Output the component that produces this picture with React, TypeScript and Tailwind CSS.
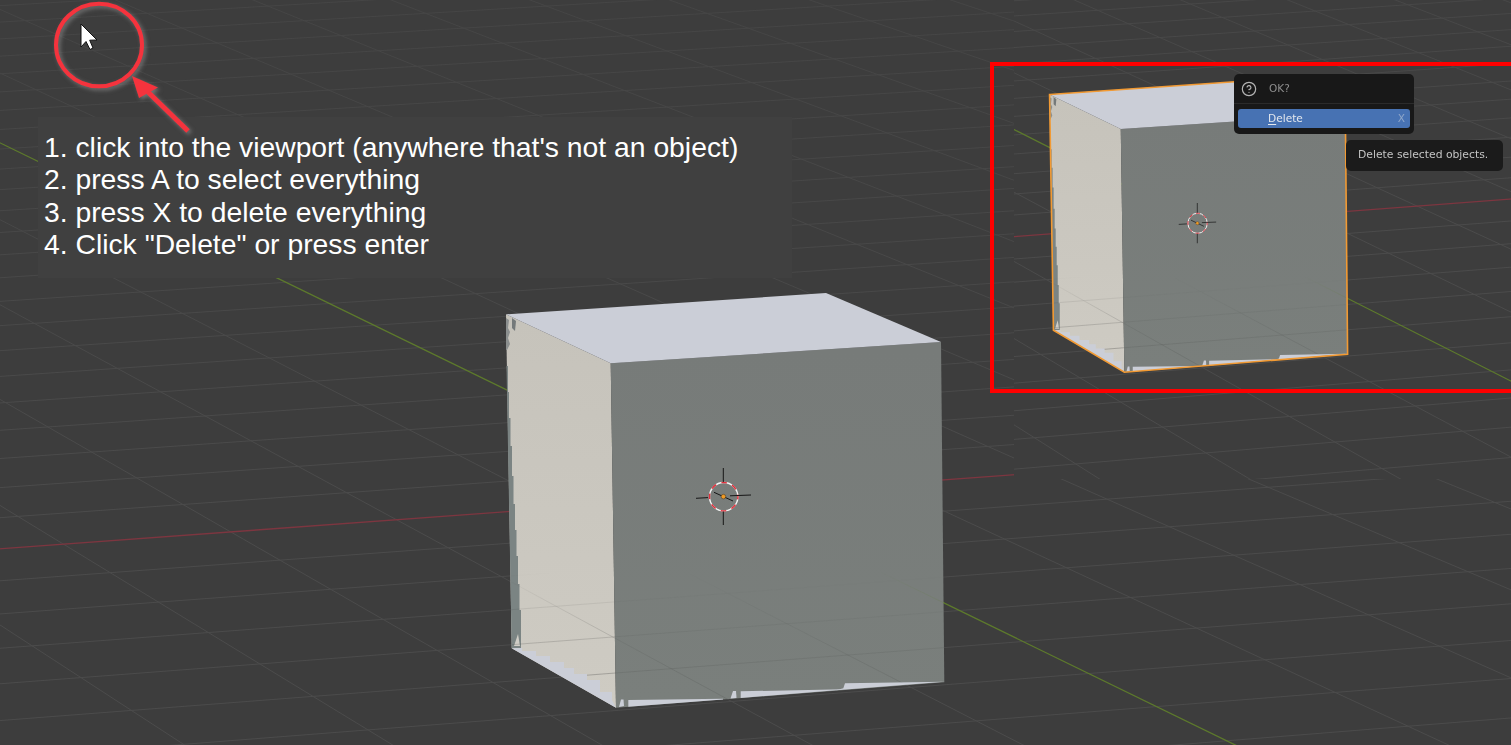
import React from "react";
import { CircleHelp } from "lucide-react";

// Floor plane -> screen homography, calibrated from the reference grid.
const project = (u: number, v: number): [number, number] => {
  const w = 1 + 0.00419 * u - 0.015 * v;
  return [(724.3 + 165.5 * u + 44.4 * v) / w, (495.9 - 9.77 * u + 19.5 * v) / w];
};

const range = (a: number, b: number) => Array.from({ length: b - a + 1 }, (_, i) => a + i);
const U0 = -50, U1 = 70, V0 = -48, V1 = 34;

function GridLines({ stroke, red, green, axis = 1 }: { stroke: string; red: string; green: string; axis?: number }) {
  const line = (a: [number, number], b: [number, number], key: string, color: string, width = 1) => (
    <line key={key} x1={a[0]} y1={a[1]} x2={b[0]} y2={b[1]} stroke={color} strokeWidth={width} vectorEffect="non-scaling-stroke" />
  );
  return (
    <>
      {range(U0, U1).filter((u) => u !== 0).map((u) => line(project(u, V0), project(u, V1), `u${u}`, stroke))}
      {range(V0, V1).filter((v) => v !== 0).map((v) => line(project(U0, v), project(U1, v), `v${v}`, stroke))}
      {line(project(U0, 0), project(U1, 0), "red", red, axis)}
      {line(project(0, V0), project(0, V1), "green", green, axis)}
    </>
  );
}

const CUBE = "506,314.3 826,293 941,342 944.3,682.3 616,707.7 511.7,648.3";
const LEFT = "506,314.3 610.7,363.3 616,707.7 511.7,648.3";
const RIGHT = "610.7,363.3 941,342 944.3,682.3 616,707.7";

function Cube({ selected }: { selected?: boolean }) {
  return (
    <>
      <polygon points={LEFT} fill="url(#leftFace)" />
      <polygon points={RIGHT} fill="url(#rightFace)" />
      <polygon points="506,314.3 826,293 941,342 610.7,363.3" fill="#cbced7" />
      {/* z-fighting strip on the left edge */}
      <polygon
        points="506.5,366 508,366 508,392 509,392 509,418 510.5,418 510.5,446 512,446 512,476 513.5,476 513.5,504 515,504 515,530 516.5,530 516.5,556 518,556 518,584 519.5,584 519.5,610 521,610 521,648 511.7,648.3"
        fill="#7b8483"
      />
      <polygon points="506,318 509,320 508,328 510,332 508,338 510,344 507,350 506,350" fill="#8b8f8f" />
      <polygon points="512,318 516,321 515,331 512,328" fill="#74797a" />
      <polygon points="514,646 518,634 520,646" fill="#d0cdc6" />
      {/* grid seen through the base of the cube */}
      <g mask="url(#cubeFade)">
        <g clipPath="url(#leftClip)">
          <GridLines stroke="rgba(55,55,55,0.3)" red="rgba(55,55,55,0.3)" green="rgba(90,130,30,0.5)" />
        </g>
        <g clipPath="url(#rightClip)">
          <GridLines stroke="rgba(55,55,55,0.14)" red="rgba(55,55,55,0.14)" green="rgba(90,130,30,0.5)" />
        </g>
      </g>
      {/* top face showing through along the bottom edges */}
      <polygon
        points="511.7,648.3 522,648 522,651 536,651 536,656 550,656 550,662 564,662 564,668 574,668 574,674 587,674 587,680 600,680 600,692 612,692 612,700 616,707.7"
        fill="#cbced7"
      />
      <polygon points="628.3,700 723,698.7 723,699.6 628.3,706.7" fill="#cbced7" />
      <polygon points="740.7,691.3 843.3,689.3 836,690.3 740.7,698" fill="#cbced7" />
      <polygon points="845,683.3 944.3,681.7 836,690.3 843.3,688.3" fill="#cbced7" />
      <polygon points="621,699.6 623.5,699.6 624,706 619,707" fill="#cbced7" />
      <polygon points="733,691 736,691 736.5,698 730.5,698.5" fill="#cbced7" />
      {selected && (
        <polygon points={CUBE} fill="none" stroke="#f29a33" strokeWidth={1.6} vectorEffect="non-scaling-stroke" />
      )}
      {/* 3D cursor */}
      <g strokeLinecap="butt">
        <circle cx={723.7} cy={496.7} r={14.2} fill="none" stroke="#f4f4f4" strokeWidth={1.4} />
        <circle cx={723.7} cy={496.7} r={14.2} fill="none" stroke="#e2303c" strokeWidth={1.4} strokeDasharray="5.6 5.56" strokeDashoffset={2.8} />
        <g stroke="#161616" strokeWidth={1} fill="none">
          <line x1={723.3} y1={468} x2={723.3} y2={482} />
          <line x1={723.3} y1={511.5} x2={723.3} y2={525} />
          <line x1={696} y1={498.3} x2={708} y2={497.6} />
          <line x1={730} y1={495.8} x2={751} y2={495} />
          <line x1={714} y1={492.3} x2={733} y2={501} />
        </g>
        <circle cx={723.4} cy={496.6} r={2.3} fill="#f09a24" stroke="#3a3226" strokeWidth={0.5} />
      </g>
    </>
  );
}

function Viewport({ selected }: { selected?: boolean }) {
  return (
    <>
      <g className="blur-[0.3px]">
        <GridLines stroke="url(#gridStroke)" red="#7d3640" green="#5d7a2c" axis={1.3} />
      </g>
      <Cube selected={selected} />
    </>
  );
}

export default function App() {
  return (
    <div className="relative w-[1511px] h-[745px] overflow-hidden bg-[#3d3d3d] font-['Liberation_Sans',Arial,sans-serif]">
      <svg width={1511} height={745} viewBox="0 0 1511 745" className="block">
        <defs>
          <linearGradient id="gridStroke" gradientUnits="userSpaceOnUse" x1={0} y1={0} x2={0} y2={500}>
            <stop offset="0" stopColor="#454545" />
            <stop offset="1" stopColor="#4b4b4b" />
          </linearGradient>
          <linearGradient id="leftFace" gradientUnits="userSpaceOnUse" x1={0} y1={320} x2={0} y2={700}>
            <stop offset="0" stopColor="#c6c3bb" />
            <stop offset="1" stopColor="#cecbc3" />
          </linearGradient>
          <linearGradient id="rightFace" gradientUnits="userSpaceOnUse" x1={0} y1={350} x2={0} y2={700}>
            <stop offset="0" stopColor="#777b79" />
            <stop offset="1" stopColor="#7a7f7c" />
          </linearGradient>
          <linearGradient id="fadeGrad" gradientUnits="userSpaceOnUse" x1={0} y1={572} x2={0} y2={680}>
            <stop offset="0" stopColor="#000" />
            <stop offset="1" stopColor="#fff" />
          </linearGradient>
          <mask id="cubeFade" maskUnits="userSpaceOnUse" x={400} y={200} width={700} height={600}>
            <rect x={400} y={200} width={700} height={600} fill="url(#fadeGrad)" />
          </mask>
          <clipPath id="leftClip">
            <polygon points={LEFT} />
          </clipPath>
          <clipPath id="rightClip">
            <polygon points={RIGHT} />
          </clipPath>
          <clipPath id="pasteClip">
            <rect x={1014} y={0} width={497} height={479} />
          </clipPath>
        </defs>

        <Viewport />

        {/* second, smaller capture of the same viewport pasted at the top right */}
        <g clipPath="url(#pasteClip)">
          <rect x={1014} y={0} width={497} height={479} fill="#3d3d3d" />
          <g className="blur-[0.35px]" transform="translate(1198 222.7) scale(0.68 0.706) translate(-724.3 -495.9)">
            <Viewport selected />
          </g>
        </g>
      </svg>

      {/* instructions */}
      <div className="absolute left-[38px] top-[117px] w-[754px] h-[161px] bg-[#404040] pl-[6px] pt-[14px] text-[28.3px] leading-[32.3px] text-white">
        <p>1. click into the viewport (anywhere that's not an object)</p>
        <p>2. press A to select everything</p>
        <p>3. press X to delete everything</p>
        <p>4. Click "Delete" or press enter</p>
      </div>

      {/* annotation: circle, arrow, mouse pointer */}
      <svg width={240} height={150} viewBox="0 0 240 150" className="absolute left-0 top-0">
        <g className="drop-shadow-[2px_2px_2px_rgba(135,135,135,0.75)]">
          <ellipse cx={99} cy={45} rx={43} ry={41.3} fill="none" stroke="#f5333d" strokeWidth={4} />
          <line x1={148} y1={92} x2={188} y2={131} stroke="#f5333d" strokeWidth={5} />
          <polygon points="132,76 158,87.5 139,98" fill="#f5333d" />
        </g>
        <polygon
          points="81,24 81,47 86,41.5 90,49.5 93,48 89.7,40.2 97,40"
          fill="#ffffff"
          stroke="#111"
          strokeWidth={1}
          strokeLinejoin="miter"
        />
      </svg>

      {/* red frame round the pasted capture */}
      <div className="absolute left-[990px] top-[62px] w-[540px] h-[331px] border-4 border-[#ff0000]" />

      {/* Blender confirm popup */}
      <div className="absolute left-[1234px] top-[74px] w-[180px] h-[60px] rounded-[5px] bg-[#181818] flex flex-col font-['DejaVu_Sans',sans-serif] blur-[0.4px]">
        <div className="h-[30px] flex items-center pl-[7px] gap-[12px] border-b border-[#2b2b2b]">
          <CircleHelp size={16} strokeWidth={1.8} className="text-[#b4b4b4]" />
          <span className="text-[10.5px] text-[#8e8e8e]">OK?</span>
        </div>
        <div className="mx-[4px] mt-[5px] h-[19px] rounded-[3px] bg-[#4772b3] flex items-center justify-between pl-[30px] pr-[5px] text-[10.6px]">
          <span className="text-[#e4e8ee]">
            <span className="underline underline-offset-2">D</span>elete
          </span>
          <span className="text-[#8fa6c9]">X</span>
        </div>
      </div>

      {/* tooltip */}
      <div className="absolute left-[1346px] top-[140px] w-[157px] h-[31px] rounded-[5px] bg-[#1b1b1b] flex items-center pl-[12px] font-['DejaVu_Sans',sans-serif] text-[10.8px] text-[#c4c4c4] whitespace-nowrap blur-[0.4px]">
        Delete selected objects.
      </div>
    </div>
  );
}
